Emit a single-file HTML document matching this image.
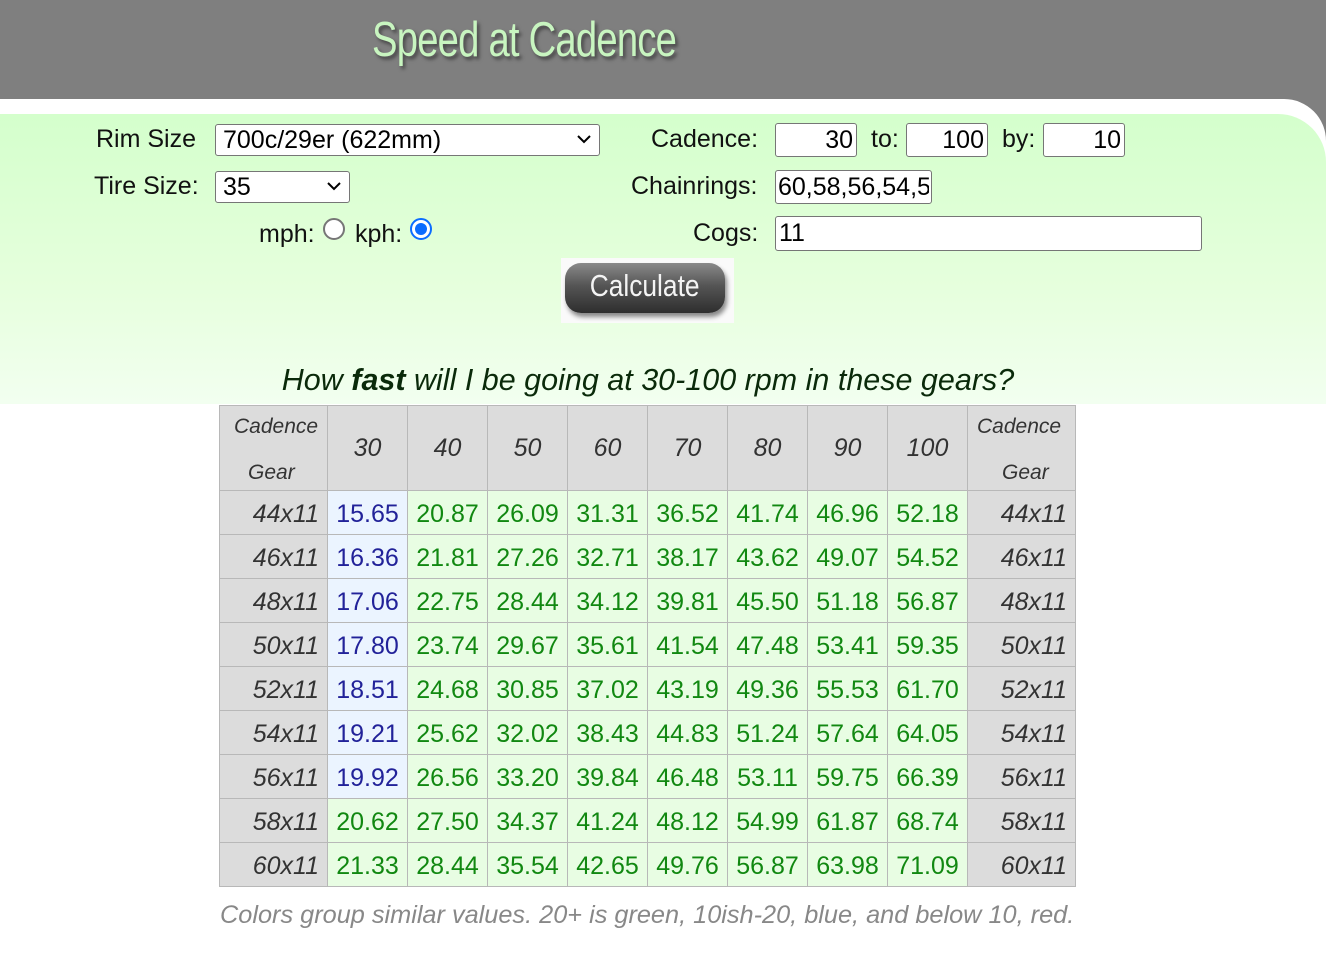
<!DOCTYPE html>
<html><head><meta charset="utf-8"><style>
*{box-sizing:border-box}
body{margin:0;width:1326px;height:971px;background:#808080;font-family:"Liberation Sans",sans-serif;position:relative;overflow:hidden}
.hdr{position:absolute;left:0;top:0;width:1326px;height:100px;background:#7f7f7f}
.title{position:absolute;left:372px;top:12px;font-family:"Liberation Sans Narrow","Liberation Sans",sans-serif;font-size:49px;color:#c8f5c0;letter-spacing:-1px;transform:scaleX(0.78);transform-origin:left;text-shadow:3px 3px 4px #444}
.white{position:absolute;left:0;top:99px;width:1326px;height:880px;background:#fff;border-top-right-radius:42px}
.green{position:absolute;left:0;top:114px;width:1326px;height:290px;background:linear-gradient(#d4ffcc,#e6ffdd 60%,#f2fff0);border-top-right-radius:48px}
.l{position:absolute;font-size:25px;color:#111;white-space:nowrap}
.inp{position:absolute;background:#fff;border:1px solid #767676;border-radius:3px;font-size:25px;color:#000;padding:0 3px;line-height:30px;white-space:nowrap;overflow:hidden}
.sel{position:absolute;background:#fff;border:1px solid #767676;border-radius:3px;font-size:25px;line-height:30px;padding-left:7px}
.sel svg{position:absolute;right:8px;top:10px}
.radio{position:absolute;width:22px;height:22px;border-radius:50%}
.btn{position:absolute;left:561px;top:258px;width:173px;height:65px;background:#fafafa}
.btn div{position:absolute;left:4px;top:5px;width:160px;height:50px;border-radius:16px;background:linear-gradient(#8a8a8a,#555 45%,#2e2e2e);box-shadow:2px 4px 5px #888;color:#f4f4f4;font-size:31px;text-align:center;line-height:46px}
.btn span{display:inline-block;transform:scaleX(0.85)}
.q{position:absolute;left:0;width:1296px;top:363px;text-align:center;font-size:30.5px;font-style:italic;color:#0a2a0a}
table{position:absolute;left:219px;top:405px;border-collapse:collapse;table-layout:fixed;font-size:25px}
td{border:1px solid #b8b8b8;height:44px;padding:3px 0 0;text-align:center}
td.g{background:#dcdcdc;color:#333;font-style:italic;text-align:right;padding-right:8px}
td.n{background:#e8fde3;color:#118811}
td.b{background:#ebf4ff;color:#222299}
th{background:#dcdcdc;color:#333;font-style:italic;font-weight:normal;border:1px solid #b8b8b8;height:85px;font-size:25px}
th.c{font-size:21px;text-align:left;vertical-align:top}
.foot{position:absolute;left:220px;top:901px;font-size:25.3px;font-style:italic;color:#888}
</style></head><body>
<div class="hdr"></div>
<div class="title">Speed at Cadence</div>
<div class="white"></div>
<div class="green"></div>
<div class="l" style="left:96px;top:125px">Rim Size</div>
<div class="sel" style="left:215px;top:124px;width:385px;height:32px">700c/29er (622mm)<svg width="14" height="9"><path d="M1 1L7 7L13 1" stroke="#000" stroke-width="2" fill="none"/></svg></div>
<div class="l" style="left:94px;top:172px">Tire Size:</div>
<div class="sel" style="left:215px;top:171px;width:135px;height:32px">35<svg width="14" height="9"><path d="M1 1L7 7L13 1" stroke="#000" stroke-width="2" fill="none"/></svg></div>
<div class="l" style="left:259px;top:220px">mph:</div>
<div class="radio" style="left:323px;top:218px;border:2px solid #767676;background:#fff"></div>
<div class="l" style="left:355px;top:220px">kph:</div>
<div class="radio" style="left:410px;top:218px;border:2px solid #0b6cff;background:#fff"><div style="position:absolute;left:3px;top:3px;width:12px;height:12px;border-radius:50%;background:#0b6cff"></div></div>
<div class="l" style="left:651px;top:125px">Cadence:</div>
<div class="inp" style="left:775px;top:123px;width:82px;height:34px;text-align:right;line-height:32px">30</div>
<div class="l" style="left:871px;top:125px">to:</div>
<div class="inp" style="left:906px;top:123px;width:82px;height:34px;text-align:right;line-height:32px">100</div>
<div class="l" style="left:1002px;top:125px">by:</div>
<div class="inp" style="left:1043px;top:123px;width:82px;height:34px;text-align:right;line-height:32px">10</div>
<div class="l" style="left:631px;top:172px">Chainrings:</div>
<div class="inp" style="left:775px;top:170px;width:157px;height:34px;line-height:32px;padding-left:2px"><span style="display:inline-block;width:151px;overflow:hidden">60,58,56,54,5</span></div>
<div class="l" style="left:693px;top:219px">Cogs:</div>
<div class="inp" style="left:775px;top:216px;width:427px;height:35px;line-height:33px">11</div>
<div class="btn"><div><span>Calculate</span></div></div>
<div class="q">How <b>fast</b> will I be going at 30-100 rpm in these gears?</div>
<table>
<colgroup><col style="width:108px"><col span="8" style="width:80px"><col style="width:108px"></colgroup>
<tr><th class="c"><div style="margin-top:8px;padding-left:13px">Cadence</div><div style="margin-top:22px;padding-left:27px">Gear</div></th><th>30</th><th>40</th><th>50</th><th>60</th><th>70</th><th>80</th><th>90</th><th>100</th><th class="c"><div style="margin-top:8px;padding-left:8px">Cadence</div><div style="margin-top:22px;padding-left:33px">Gear</div></th></tr>
<tr><td class="g">44x11</td><td class="b">15.65</td><td class="n">20.87</td><td class="n">26.09</td><td class="n">31.31</td><td class="n">36.52</td><td class="n">41.74</td><td class="n">46.96</td><td class="n">52.18</td><td class="g">44x11</td></tr>
<tr><td class="g">46x11</td><td class="b">16.36</td><td class="n">21.81</td><td class="n">27.26</td><td class="n">32.71</td><td class="n">38.17</td><td class="n">43.62</td><td class="n">49.07</td><td class="n">54.52</td><td class="g">46x11</td></tr>
<tr><td class="g">48x11</td><td class="b">17.06</td><td class="n">22.75</td><td class="n">28.44</td><td class="n">34.12</td><td class="n">39.81</td><td class="n">45.50</td><td class="n">51.18</td><td class="n">56.87</td><td class="g">48x11</td></tr>
<tr><td class="g">50x11</td><td class="b">17.80</td><td class="n">23.74</td><td class="n">29.67</td><td class="n">35.61</td><td class="n">41.54</td><td class="n">47.48</td><td class="n">53.41</td><td class="n">59.35</td><td class="g">50x11</td></tr>
<tr><td class="g">52x11</td><td class="b">18.51</td><td class="n">24.68</td><td class="n">30.85</td><td class="n">37.02</td><td class="n">43.19</td><td class="n">49.36</td><td class="n">55.53</td><td class="n">61.70</td><td class="g">52x11</td></tr>
<tr><td class="g">54x11</td><td class="b">19.21</td><td class="n">25.62</td><td class="n">32.02</td><td class="n">38.43</td><td class="n">44.83</td><td class="n">51.24</td><td class="n">57.64</td><td class="n">64.05</td><td class="g">54x11</td></tr>
<tr><td class="g">56x11</td><td class="b">19.92</td><td class="n">26.56</td><td class="n">33.20</td><td class="n">39.84</td><td class="n">46.48</td><td class="n">53.11</td><td class="n">59.75</td><td class="n">66.39</td><td class="g">56x11</td></tr>
<tr><td class="g">58x11</td><td class="n">20.62</td><td class="n">27.50</td><td class="n">34.37</td><td class="n">41.24</td><td class="n">48.12</td><td class="n">54.99</td><td class="n">61.87</td><td class="n">68.74</td><td class="g">58x11</td></tr>
<tr><td class="g">60x11</td><td class="n">21.33</td><td class="n">28.44</td><td class="n">35.54</td><td class="n">42.65</td><td class="n">49.76</td><td class="n">56.87</td><td class="n">63.98</td><td class="n">71.09</td><td class="g">60x11</td></tr>
</table>
<div class="foot">Colors group similar values. 20+ is green, 10ish-20, blue, and below 10, red.</div>
</body></html>
